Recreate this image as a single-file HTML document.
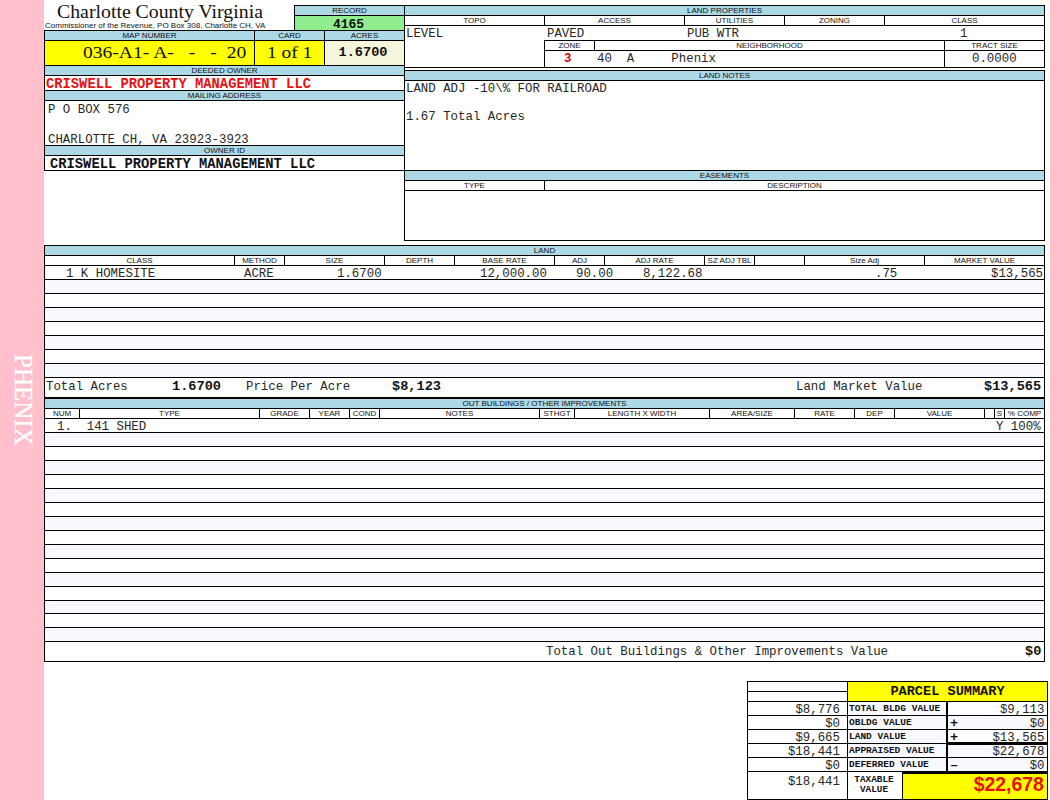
<!DOCTYPE html>
<html><head><meta charset="utf-8"><title>Charlotte County Virginia</title>
<style>
html,body{margin:0;padding:0;background:#fff;}
body{width:1050px;height:800px;position:relative;overflow:hidden;font-family:"Liberation Mono",monospace;}
.b{position:absolute;box-sizing:border-box;border:1px solid #000;white-space:pre;overflow:hidden;}
.t{position:absolute;white-space:pre;}
.h{background:#add8e6;font-family:"Liberation Sans",sans-serif;font-size:8px;line-height:9px;text-align:center;color:#111;}
.l{background:#fff;font-family:"Liberation Sans",sans-serif;font-size:8px;line-height:9px;text-align:center;color:#111;}
.nb{border:none;}
.m{font-family:"Liberation Mono",monospace;font-size:12.4px;line-height:14px;color:#262626;}
.mb{font-family:"Liberation Mono",monospace;font-weight:bold;color:#111;}
.side{position:absolute;left:0;top:0;width:44px;height:800px;background:#ffc0cb;}
.r{text-align:right;}
.serif{font-family:"Liberation Serif",serif;}
.sans{font-family:"Liberation Sans",sans-serif;}
.w{background:#fff;}
.g{background:#f8f8ff;}
</style></head>
<body>
<div class="side"></div>
<div class="t serif" style="left:37px;top:354px;transform-origin:0 0;transform:rotate(90deg);font-size:25px;line-height:28px;color:#fff;-webkit-text-stroke:0.3px #fff;">PHENIX</div>
<div class="t serif" style="left:57px;top:2.3px;font-size:18.5px;line-height:20px;color:#111;transform-origin:0 0;transform:scaleX(1.07);">Charlotte County Virginia</div>
<div class="t sans" style="left:45px;top:21px;font-size:8px;line-height:9px;color:#111;">Commissioner of the Revenue, PO Box 308, Charlotte CH, VA</div>
<div class="b h" style="left:294px;top:5px;width:111px;height:11px;">RECORD</div>
<div class="b mb" style="left:294px;top:15px;width:111px;height:16px;background:#90ee90;text-align:center;font-size:13px;line-height:17px;padding-right:2px;">4165</div>
<div class="b h" style="left:44px;top:30px;width:211px;height:11px;">MAP NUMBER</div>
<div class="b h" style="left:254px;top:30px;width:71px;height:11px;">CARD</div>
<div class="b h" style="left:324px;top:30px;width:81px;height:11px;">ACRES</div>
<div class="b " style="left:44px;top:40px;width:211px;height:26px;background:#ffff00;"></div>
<div class="b " style="left:254px;top:40px;width:71px;height:26px;background:#ffff00;"></div>
<div class="t serif" style="left:83px;top:43px;font-size:17px;line-height:20px;color:#111;transform-origin:0 0;transform:scaleX(1.15);word-spacing:0.1px;">036-A1- A-   -   -  20</div>
<div class="t serif" style="left:267px;top:43px;font-size:17px;line-height:20px;color:#111;transform-origin:0 0;transform:scaleX(1.14);">1 of 1</div>
<div class="b mb" style="left:324px;top:40px;width:81px;height:26px;background:#f5f5dc;font-size:13.6px;line-height:23px;text-align:center;padding-right:3px;">1.6700</div>
<div class="b h" style="left:44px;top:65px;width:361px;height:11px;">DEEDED OWNER</div>
<div class="b mb" style="left:44px;top:75px;width:361px;height:16px;color:#e81010;font-size:13.8px;line-height:16px;padding-left:1px;padding-top:1px;">CRISWELL PROPERTY MANAGEMENT LLC</div>
<div class="b h" style="left:44px;top:90px;width:361px;height:11px;">MAILING ADDRESS</div>
<div class="b m" style="left:44px;top:100px;width:361px;height:46px;padding-left:3px;padding-top:1.5px;line-height:15px;">P O BOX 576

CHARLOTTE CH, VA 23923-3923</div>
<div class="b h" style="left:44px;top:145px;width:361px;height:11px;">OWNER ID</div>
<div class="b mb" style="left:44px;top:155px;width:361px;height:16px;font-size:13.8px;line-height:16px;padding-left:5px;padding-top:1px;">CRISWELL PROPERTY MANAGEMENT LLC</div>
<div class="b h" style="left:404px;top:5px;width:641px;height:11px;">LAND PROPERTIES</div>
<div class="b w" style="left:404px;top:15px;width:641px;height:53px;"></div>
<div class="b l" style="left:404px;top:15px;width:141px;height:11px;">TOPO</div>
<div class="b l" style="left:544px;top:15px;width:141px;height:11px;">ACCESS</div>
<div class="b l" style="left:684px;top:15px;width:101px;height:11px;">UTILITIES</div>
<div class="b l" style="left:784px;top:15px;width:101px;height:11px;">ZONING</div>
<div class="b l" style="left:884px;top:15px;width:161px;height:11px;">CLASS</div>
<div class="t m" style="left:406px;top:27px;">LEVEL</div>
<div class="t m" style="left:547px;top:27px;">PAVED</div>
<div class="t m" style="left:687px;top:27px;">PUB WTR</div>
<div class="t m" style="left:960px;top:27px;">1</div>
<div class="b l" style="left:544px;top:40px;width:51px;height:11px;">ZONE</div>
<div class="b l" style="left:594px;top:40px;width:351px;height:11px;">NEIGHBORHOOD</div>
<div class="b l" style="left:944px;top:40px;width:101px;height:11px;">TRACT SIZE</div>
<div class="b " style="left:544px;top:40px;width:501px;height:28px;background:transparent;"></div>
<div class="b " style="left:944px;top:40px;width:101px;height:28px;background:transparent;"></div>
<div class="t m mb" style="left:564px;top:52px;color:#e00000;">3</div>
<div class="t m" style="left:597px;top:52px;">40  A     Phenix</div>
<div class="t m" style="left:972px;top:52px;">0.0000</div>
<div class="b h" style="left:404px;top:70px;width:641px;height:11px;">LAND NOTES</div>
<div class="b m" style="left:404px;top:80px;width:641px;height:91px;padding-left:1px;padding-top:1px;line-height:14px;">LAND ADJ -10\% FOR RAILROAD

1.67 Total Acres</div>
<div class="b h" style="left:404px;top:170px;width:641px;height:11px;">EASEMENTS</div>
<div class="b l" style="left:404px;top:180px;width:141px;height:11px;">TYPE</div>
<div class="b l" style="left:544px;top:180px;width:501px;height:11px;">DESCRIPTION</div>
<div class="b w" style="left:404px;top:190px;width:641px;height:51px;"></div>
<div class="b h" style="left:44px;top:245px;width:1001px;height:11px;">LAND</div>
<div class="b w" style="left:44px;top:255px;width:1001px;height:11px;"></div>
<div class="b l" style="left:44px;top:255px;width:191px;height:11px;">CLASS</div>
<div class="b l" style="left:234px;top:255px;width:51px;height:11px;">METHOD</div>
<div class="b l" style="left:284px;top:255px;width:101px;height:11px;">SIZE</div>
<div class="b l" style="left:384px;top:255px;width:71px;height:11px;">DEPTH</div>
<div class="b l" style="left:454px;top:255px;width:101px;height:11px;">BASE RATE</div>
<div class="b l" style="left:554px;top:255px;width:51px;height:11px;">ADJ</div>
<div class="b l" style="left:604px;top:255px;width:101px;height:11px;">ADJ RATE</div>
<div class="b l" style="left:704px;top:255px;width:51px;height:11px;">SZ ADJ TBL</div>
<div class="b l" style="left:804px;top:255px;width:121px;height:11px;">Size Adj</div>
<div class="b l" style="left:924px;top:255px;width:121px;height:11px;">MARKET VALUE</div>
<div class="b w" style="left:44px;top:265px;width:1001px;height:15px;"></div>
<div class="b g" style="left:44px;top:279px;width:1001px;height:15px;"></div>
<div class="b w" style="left:44px;top:293px;width:1001px;height:15px;"></div>
<div class="b g" style="left:44px;top:307px;width:1001px;height:15px;"></div>
<div class="b w" style="left:44px;top:321px;width:1001px;height:15px;"></div>
<div class="b g" style="left:44px;top:335px;width:1001px;height:15px;"></div>
<div class="b w" style="left:44px;top:349px;width:1001px;height:15px;"></div>
<div class="b g" style="left:44px;top:363px;width:1001px;height:15px;"></div>
<div class="b w" style="left:44px;top:377px;width:1001px;height:21px;"></div>
<div class="t m" style="left:66px;top:267px;">1 K HOMESITE</div>
<div class="t m" style="left:244px;top:267px;">ACRE</div>
<div class="t m" style="left:337px;top:267px;">1.6700</div>
<div class="t m" style="left:480px;top:267px;">12,000.00</div>
<div class="t m" style="left:576px;top:267px;">90.00</div>
<div class="t m" style="left:643px;top:267px;">8,122.68</div>
<div class="t m" style="left:875px;top:267px;">.75</div>
<div class="t m" style="left:991px;top:267px;">$13,565</div>
<div class="t m" style="left:46px;top:380px;">Total Acres</div>
<div class="t m mb" style="left:172px;top:380px;font-size:13.6px;">1.6700</div>
<div class="t m" style="left:246px;top:380px;">Price Per Acre</div>
<div class="t m mb" style="left:392px;top:380px;font-size:13.6px;">$8,123</div>
<div class="t m" style="left:796px;top:380px;">Land Market Value</div>
<div class="t m mb" style="left:984px;top:380px;font-size:13.6px;">$13,565</div>
<div class="b h" style="left:44px;top:398px;width:1001px;height:11px;">OUT BUILDINGS / OTHER IMPROVEMENTS</div>
<div class="b w" style="left:44px;top:408px;width:1001px;height:11px;"></div>
<div class="b l" style="left:44px;top:408px;width:36px;height:11px;">NUM</div>
<div class="b l" style="left:79px;top:408px;width:181px;height:11px;">TYPE</div>
<div class="b l" style="left:259px;top:408px;width:51px;height:11px;">GRADE</div>
<div class="b l" style="left:309px;top:408px;width:41px;height:11px;">YEAR</div>
<div class="b l" style="left:349px;top:408px;width:31px;height:11px;">COND</div>
<div class="b l" style="left:379px;top:408px;width:161px;height:11px;">NOTES</div>
<div class="b l" style="left:539px;top:408px;width:36px;height:11px;">STHGT</div>
<div class="b l" style="left:574px;top:408px;width:136px;height:11px;">LENGTH X WIDTH</div>
<div class="b l" style="left:709px;top:408px;width:86px;height:11px;">AREA/SIZE</div>
<div class="b l" style="left:794px;top:408px;width:61px;height:11px;">RATE</div>
<div class="b l" style="left:854px;top:408px;width:41px;height:11px;">DEP</div>
<div class="b l" style="left:894px;top:408px;width:91px;height:11px;">VALUE</div>
<div class="b l" style="left:984px;top:408px;width:11px;height:11px;"></div>
<div class="b l" style="left:994px;top:408px;width:11px;height:11px;">S</div>
<div class="b l" style="left:1004px;top:408px;width:41px;height:11px;">% COMP</div>
<div class="b w" style="left:44px;top:418px;width:1001px;height:15px;"></div>
<div class="b g" style="left:44px;top:432px;width:1001px;height:15px;"></div>
<div class="b w" style="left:44px;top:446px;width:1001px;height:15px;"></div>
<div class="b g" style="left:44px;top:460px;width:1001px;height:15px;"></div>
<div class="b w" style="left:44px;top:474px;width:1001px;height:15px;"></div>
<div class="b g" style="left:44px;top:488px;width:1001px;height:15px;"></div>
<div class="b w" style="left:44px;top:502px;width:1001px;height:15px;"></div>
<div class="b g" style="left:44px;top:516px;width:1001px;height:15px;"></div>
<div class="b w" style="left:44px;top:530px;width:1001px;height:15px;"></div>
<div class="b g" style="left:44px;top:544px;width:1001px;height:15px;"></div>
<div class="b w" style="left:44px;top:558px;width:1001px;height:15px;"></div>
<div class="b g" style="left:44px;top:572px;width:1001px;height:15px;"></div>
<div class="b w" style="left:44px;top:586px;width:1001px;height:15px;"></div>
<div class="b g" style="left:44px;top:600px;width:1001px;height:14px;"></div>
<div class="b w" style="left:44px;top:613px;width:1001px;height:15px;"></div>
<div class="b g" style="left:44px;top:627px;width:1001px;height:15px;"></div>
<div class="b w" style="left:44px;top:641px;width:1001px;height:21px;"></div>
<div class="t m" style="left:57px;top:420px;">1.  141 SHED</div>
<div class="t m" style="left:996px;top:420px;">Y 100%</div>
<div class="t m" style="left:546px;top:645px;">Total Out Buildings &amp; Other Improvements Value</div>
<div class="t m mb" style="left:1025px;top:645px;font-size:13.6px;">$0</div>
<div class="b w" style="left:747px;top:681px;width:301px;height:119px;"></div>
<div class="b w" style="left:747px;top:681px;width:101px;height:11px;"></div>
<div class="b w" style="left:747px;top:691px;width:101px;height:11px;"></div>
<div class="b mb" style="left:847px;top:681px;width:201px;height:21px;background:#ffff00;text-align:center;font-size:13.6px;line-height:19px;color:#111;">PARCEL SUMMARY</div>
<div class="b m r w" style="left:747px;top:701px;width:101px;height:15px;padding-right:7px;line-height:16px;">$8,776</div>
<div class="b mb g" style="left:847px;top:701px;width:101px;height:15px;font-size:9.5px;line-height:13px;padding-left:1px;color:#111;">TOTAL BLDG VALUE</div>
<div class="b m r w" style="left:947px;top:701px;width:101px;height:15px;padding-right:2.5px;line-height:16px;">$9,113</div>
<div class="b m r w" style="left:747px;top:715px;width:101px;height:15px;padding-right:7px;line-height:16px;">$0</div>
<div class="b mb g" style="left:847px;top:715px;width:101px;height:15px;font-size:9.5px;line-height:13px;padding-left:1px;color:#111;">OBLDG VALUE</div>
<div class="b m r g" style="left:947px;top:715px;width:101px;height:15px;padding-right:2.5px;line-height:16px;">$0</div>
<div class="t m mb" style="left:950px;top:715px;line-height:17px;font-size:13.6px;">+</div>
<div class="b m r w" style="left:747px;top:729px;width:101px;height:15px;padding-right:7px;line-height:16px;">$9,665</div>
<div class="b mb g" style="left:847px;top:729px;width:101px;height:15px;font-size:9.5px;line-height:13px;padding-left:1px;color:#111;">LAND VALUE</div>
<div class="b m r w" style="left:947px;top:729px;width:101px;height:15px;padding-right:2.5px;line-height:16px;">$13,565</div>
<div class="t m mb" style="left:950px;top:729px;line-height:17px;font-size:13.6px;">+</div>
<div class="b m r w" style="left:747px;top:743px;width:101px;height:15px;padding-right:7px;line-height:16px;">$18,441</div>
<div class="b mb g" style="left:847px;top:743px;width:101px;height:15px;font-size:9.5px;line-height:13px;padding-left:1px;color:#111;">APPRAISED VALUE</div>
<div class="b m r g" style="left:947px;top:743px;width:101px;height:15px;padding-right:2.5px;line-height:16px;">$22,678</div>
<div class="b m r w" style="left:747px;top:757px;width:101px;height:15px;padding-right:7px;line-height:16px;">$0</div>
<div class="b mb g" style="left:847px;top:757px;width:101px;height:15px;font-size:9.5px;line-height:13px;padding-left:1px;color:#111;">DEFERRED VALUE</div>
<div class="b m r g" style="left:947px;top:757px;width:101px;height:15px;padding-right:2.5px;line-height:16px;">$0</div>
<div class="t m mb" style="left:950px;top:757px;line-height:17px;font-size:13.6px;">&#8211;</div>
<div class="b m r w" style="left:747px;top:771px;width:101px;height:29px;padding-right:7px;line-height:20px;">$18,441</div>
<div class="b mb w" style="left:847px;top:771px;width:56px;height:29px;font-size:9.4px;line-height:10px;text-align:center;padding-top:3px;padding-right:2px;color:#111;">TAXABLE
VALUE</div>
<div class="b " style="left:902px;top:771px;width:146px;height:29px;background:#ffff00;border-top-width:3px;"></div>
<div class="t sans" style="right:6px;top:771px;color:#e81000;font-weight:bold;font-size:21px;line-height:26px;transform-origin:100% 0;transform:scaleX(0.925);">$22,678</div>
<div style="position:absolute;left:946px;top:701px;width:2px;height:71px;background:#000"></div>
<div style="position:absolute;left:946px;top:742px;width:101px;height:3px;background:#000"></div>
</body></html>
